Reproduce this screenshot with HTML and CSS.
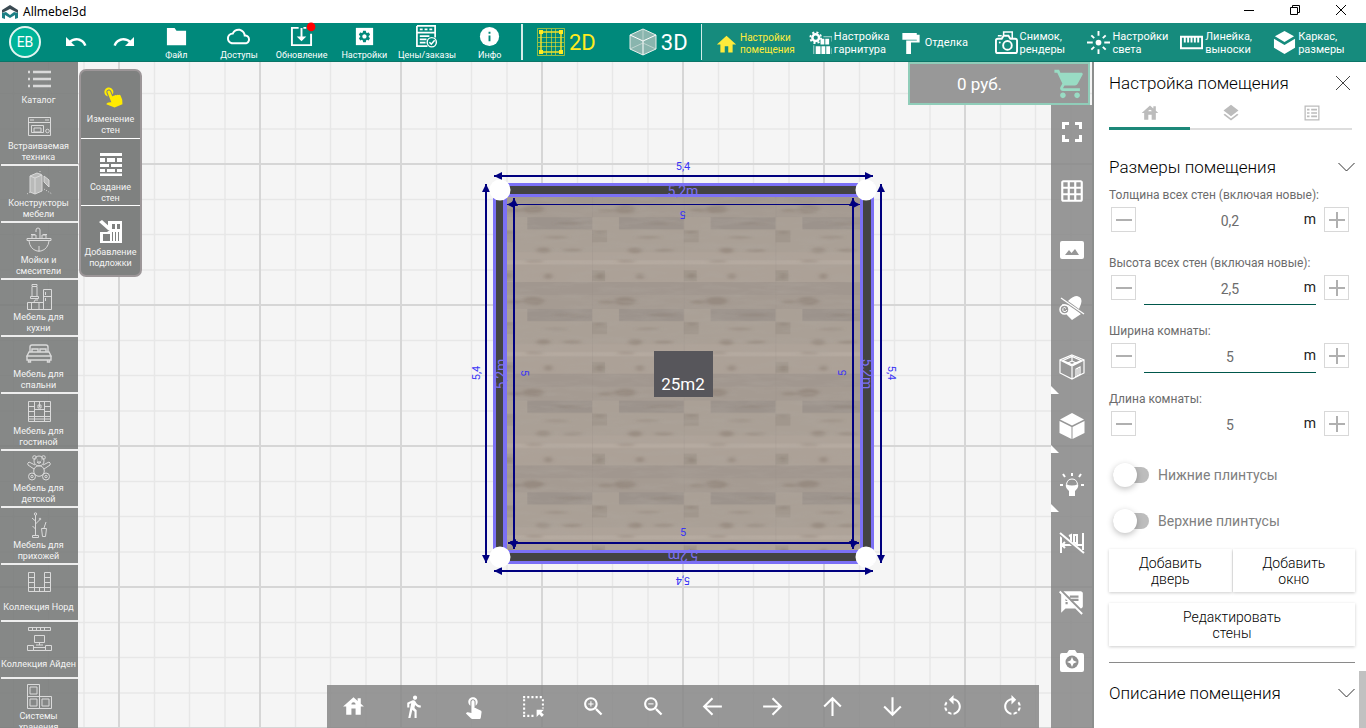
FILE: index.html
```html
<!DOCTYPE html>
<html lang="ru">
<head>
<meta charset="utf-8">
<title>Allmebel3d</title>
<link rel="stylesheet" href="styles.css">
</head>
<body>
<header class="titlebar">
  <svg class="app-logo" viewBox="0 0 16 16"><path d="M0 6l8-5 8 5v3l-8-4-8 4z" fill="#3a4a52"/><path d="M0 9l4-1 4 3 4-3 4 1v5l-3 1v-4l-5 3-5-3v4l-3-1z" fill="#1d7f85"/></svg>
  <span class="app-name">Allmebel3d</span>
  <div class="window-controls">
    <button aria-label="Свернуть"><svg viewBox="0 0 12 12"><path d="M1 6.500h10"/></svg></button>
    <button aria-label="Окно"><svg viewBox="0 0 12 12"><path d="M1.500 3.500h7v7h-7zM3.500 3.500v-2h7v7h-2"/></svg></button>
    <button aria-label="Закрыть"><svg viewBox="0 0 12 12"><path d="M1 1l10 10M11 1L1 11"/></svg></button>
  </div>
</header>

<nav class="toolbar">
  <div class="file-tools">
    <button class="avatar">EB</button>
    <button class="history" aria-label="Отменить"><svg viewBox="0 0 24 24"><path d="M12.500 8c-2.650 0-5.050.99-6.900 2.600L2 7v9h9l-3.620-3.620c1.390-1.160 3.160-1.880 5.120-1.880 3.540 0 6.550 2.310 7.600 5.500l2.370-.78C21.080 11.030 17.150 8 12.500 8z"/></svg></button>
    <button class="history" aria-label="Повторить"><svg viewBox="0 0 24 24"><path d="M18.400 10.600C16.550 8.990 14.150 8 11.500 8c-4.650 0-8.580 3.030-9.960 7.220L3.900 16c1.050-3.190 4.050-5.500 7.600-5.500 1.950 0 3.730.72 5.120 1.880L13 16h9V7l-3.600 3.600z"/></svg></button>
    <div class="file-actions">
      <button class="tool"><svg viewBox="0 0 24 24"><path d="M2 3h8l2 3h10v15H2z"/></svg>Файл</button>
      <button class="tool"><svg viewBox="0 0 24 24"><path d="M19.350 10.040C18.670 6.590 15.640 4 12 4 9.110 4 6.600 5.640 5.350 8.040 2.340 8.360 0 10.910 0 14c0 3.310 2.690 6 6 6h13c2.760 0 5-2.240 5-5 0-2.640-2.050-4.780-4.650-4.960zM19 18H6c-2.210 0-4-1.790-4-4s1.790-4 4-4h.71C7.370 7.690 9.480 6 12 6c3.040 0 5.500 2.460 5.500 5.500v.5H19c1.660 0 3 1.340 3 3s-1.340 3-3 3z"/></svg>Доступы</button>
      <button class="tool"><svg viewBox="0 0 24 24"><path d="M9 3H2v18h20V9M14 3h3" fill="none" stroke="#fff" stroke-width="2"/><path d="M11 3h2v9h4l-5 5-5-5h4z"/><circle cx="22" cy="2" r="4.500" fill="#f00"/></svg>Обновление</button>
      <button class="tool"><svg viewBox="0 0 24 24"><path d="M3 3h18v18H3z"/><g transform="translate(4.500 4.500) scale(.62)"><path fill="#00897b" fill-rule="evenodd" d="M19.140 12.940c.04-.3.06-.61.06-.94 0-.32-.02-.64-.07-.94l2.030-1.580c.18-.14.23-.41.12-.61l-1.920-3.320c-.12-.22-.37-.29-.59-.22l-2.390.96c-.5-.38-1.030-.7-1.620-.94l-.36-2.540c-.04-.24-.24-.41-.48-.41h-3.840c-.24 0-.43.17-.47.41l-.36 2.540c-.59.24-1.130.57-1.620.94l-2.390-.96c-.22-.08-.47 0-.59.22L2.740 8.870c-.12.21-.08.47.12.61l2.030 1.580c-.05.3-.09.63-.09.94s.02.64.07.94l-2.030 1.580c-.18.14-.23.41-.12.61l1.920 3.320c.12.22.37.29.59.22l2.390-.96c.5.38 1.030.7 1.620.94l.36 2.540c.05.24.24.41.48.41h3.840c.24 0 .44-.17.47-.41l.36-2.540c.59-.24 1.130-.56 1.620-.94l2.390.96c.22.08.47 0 .59-.22l1.920-3.320c.12-.22.07-.47-.12-.61l-2.010-1.580zM12 15.600c-1.980 0-3.600-1.620-3.600-3.600s1.620-3.600 3.600-3.600 3.600 1.620 3.600 3.600-1.620 3.600-3.600 3.600z"/></g></svg>Настройки</button>
      <button class="tool"><svg viewBox="0 0 24 24"><path d="M2 1h19v12M2 1v21h11M2 8h19M5 4.500h3M10 4.500h3M15 4.500h3M5 11.500h10M5 15h7M5 18.500h6" fill="none" stroke="#fff" stroke-width="1.800"/><circle cx="17.500" cy="18" r="4.800" fill="none" stroke="#fff" stroke-width="1.500"/><path d="M15 18l2 2 3.500-4" fill="none" stroke="#fff" stroke-width="1.600"/></svg>Цены/заказы</button>
      <button class="tool"><svg viewBox="0 0 24 24"><circle cx="12" cy="12" r="10"/><path d="M11 11h2v6h-2zM11 7h2v2h-2z" fill="#00897b"/></svg>Инфо</button>
    </div>
  </div>
  <div class="modes">
    <button class="mode mode-active"><svg viewBox="0 0 28 28" fill="none" stroke="#f4e02a"><path d="M.5.5h27v27H.5zM9.500 1v26M14.500 1v26M18.500 1v26M1 9.500h26M1 14.500h26M1 18.500h26" stroke-opacity=".6"/><path d="M4 4h20v20H4z" stroke-width="1.500"/><path d="M2 2h4v4H2zM22 2h4v4h-4zM2 22h4v4H2zM22 22h4v4h-4z" fill="#ffeb20" stroke="none"/></svg>2D</button>
    <button class="mode"><svg viewBox="0 0 28 28"><path d="M14 1l13 6v14l-13 6-13-6V7z" fill="#b7c4bf" fill-opacity=".75" stroke="#e8efec"/><path d="M1 7l13 6 13-6M14 13v14" fill="none" stroke="#fff"/><path d="M1 21l13-6 13 6M14 1v12" fill="none" stroke="#dfe7e4" stroke-opacity=".6"/></svg>3D</button>
  </div>
  <div class="sections">
    <button class="section section-active"><svg viewBox="0 0 24 24"><path d="M10 21v-7h4v7h5v-9h4L12 2 1 12h4v9z"/></svg><span>Настройки<br>помещения</span></button>
    <button class="section"><svg viewBox="0 0 24 24"><circle cx="7" cy="7" r="3.500" fill="none" stroke="#fff" stroke-width="2.600"/><circle cx="7" cy="7" r="5.600" fill="none" stroke="#fff" stroke-width="2" stroke-dasharray="2.200 2.200"/><path d="M12 8h4v6h-4zM17 8h4v6h-4zM7 16h5v8H7zM13 16h4v8h-4zM18 16h4v8h-4z"/><path d="M15 6h9v5M24 18v6M5 15v9" fill="none" stroke="#fff" stroke-opacity=".7"/></svg><span>Настройка<br>гарнитура</span></button>
    <button class="section section-single"><svg class="roller" viewBox="0 0 18 24"><path d="M0 2h15v2h3v8H9v12H4V10h11V6.500V9H0z"/></svg><span>Отделка</span></button>
    <button class="section"><svg viewBox="0 0 24 24" fill="none" stroke="#fff" stroke-width="2"><path d="M3 8h4l2-3h5l2 3h5q2 0 2 2v11q0 2-2 2H3q-2 0-2-2V10q0-2 2-2z"/><circle cx="13" cy="15" r="4.500"/><path d="M9 5V1h9v7M3 5h4" stroke-width="1.600"/><circle cx="5" cy="12" r="1" fill="#fff" stroke="none"/></svg><span>Снимок,<br>рендеры</span></button>
    <button class="section"><svg viewBox="0 0 24 24" stroke="#fff" stroke-width="2"><circle cx="12" cy="12" r="3" stroke="none"/><path d="M12 0v5M12 19v5M0 12h6M18 12h6M4.500 4.500l3 3M16.500 16.500l3 3M4.500 19.500l3-3M16.500 7.500l3-3"/></svg><span>Настройки<br>света</span></button>
    <button class="section"><svg viewBox="0 0 24 24" fill="none" stroke="#fff" stroke-width="2"><path d="M1 6h22v12H1zM5 6v6M8.500 6v6M12 6v6M15.500 6v6M19 6v6"/></svg><span>Линейка,<br>выноски</span></button>
    <button class="section"><svg viewBox="0 0 24 24"><path d="M12 0l10 5.500-10 6-10-6zM1 8l11 6.500L23 8v9.500L12 24 1 17.500z"/></svg><span>Каркас,<br>размеры</span></button>
  </div>
</nav>

<main class="workspace">
  <section class="stage">
    <svg class="scene" viewBox="0 62 1092 666" preserveAspectRatio="xMidYMid slice">
      <defs>
        <pattern id="grid" x="683" y="164" width="141" height="141" patternUnits="userSpaceOnUse">
          <path d="M35.500 0v141M70.500 0v141M106 0v141M0 35.500h141M0 70.500h141M0 106h141" stroke="#e7e7e7" stroke-width="1.500"/>
          <path d="M0 0h141M0 0v141M0 141h141M141 0v141" stroke="#d6d6d6" stroke-width="2"/>
        </pattern>
        <filter id="grain" x="0" y="0" width="100%" height="100%">
          <feTurbulence type="fractalNoise" baseFrequency=".03 .16" numOctaves="4" seed="7"/>
          <feColorMatrix values="0 0 0 0 .42  0 0 0 0 .38  0 0 0 0 .34  2 0 0 0 -.8"/>
        </filter>
        <filter id="soft"><feGaussianBlur stdDeviation="2 .8"/></filter>
        <pattern id="wood" x="592" y="282" width="91.700" height="91.700" patternUnits="userSpaceOnUse">
          <path fill="#aaa096" d="M0 0h92v92H0z"/>
          <path fill="#a1978f" d="M0 0h92v13H0z"/>
          <path fill="#a59b92" d="M0 13h92v14H0z"/>
          <path fill="#9c938c" d="M27 27h65v12H27z"/>
          <path fill="#aea399" d="M0 62h92v13H0z"/>
          <path fill="#b5aaa0" d="M0 70h92v4H0z"/>
          <path fill="#aca197" d="M0 75h92v17H0z"/>
          <path fill="#a1978d" d="M0 80h13v11H0zM0 40h15v12H0z"/>
          <g fill="#85786d" fill-opacity=".45" filter="url(#soft)">
            <ellipse cx="33" cy="19" rx="11" ry="4"/><ellipse cx="14" cy="20" rx="8" ry="1.500"/><ellipse cx="70" cy="33" rx="16" ry="1"/>
            <ellipse cx="43" cy="60" rx="7" ry="3"/><ellipse cx="8" cy="42" rx="5" ry="1"/><ellipse cx="34" cy="71" rx="9" ry="1"/>
            <ellipse cx="72" cy="60" rx="10" ry="1.500"/><ellipse cx="8" cy="86" rx="4" ry="3"/><ellipse cx="48" cy="86" rx="4" ry="3"/><ellipse cx="56" cy="47" rx="12" ry="1"/>
          </g>
          <path d="M0 0v92" stroke="#918780" stroke-opacity=".4"/>
        </pattern>
        <marker id="arrow" viewBox="0 0 8 8" refX="8" refY="4" markerWidth="8" markerHeight="8" markerUnits="userSpaceOnUse" orient="auto-start-reverse"><path d="M0 0l8 4-8 4z" fill="#00007f"/></marker>
      </defs>
      <path fill="#f5f5f5" d="M-1000-1000h3100v2700h-3100z"/>
      <path fill="url(#grid)" d="M-1000-1000h3100v2700h-3100z"/>
      <path fill="#7b70f5" d="M493 183h381v381H493z"/>
      <path fill="#434343" d="M496 186h375v375H496z"/>
      <path fill="#7b70f5" d="M503 194h360v359H503z"/>
      <path fill="url(#wood)" d="M507 197h353v353H507z"/>
      <rect x="507" y="197" width="353" height="353" filter="url(#grain)" opacity=".4"/>
      <path d="M507 195.500h353M507 551.500h353M505 197v353M861.500 197v353" stroke="#7b70f5" stroke-width="3"/>
      <g class="wall-size">
        <text x="683" y="196">5,2m</text>
        <text transform="translate(683 551) rotate(180)">5,2m</text>
        <text transform="translate(506 374) rotate(-90)">5,2m</text>
        <text transform="translate(862 374) rotate(90)">5,2m</text>
      </g>
      <g fill="none" stroke="#00007f" stroke-width="2">
        <path marker-start="url(#arrow)" marker-end="url(#arrow)" d="M494 176H873"/>
        <path marker-start="url(#arrow)" marker-end="url(#arrow)" d="M494 571H873"/>
        <path marker-start="url(#arrow)" marker-end="url(#arrow)" d="M486 184V563"/>
        <path marker-start="url(#arrow)" marker-end="url(#arrow)" d="M881 184V563"/>
        <path stroke-width="1" marker-start="url(#arrow)" marker-end="url(#arrow)" d="M507 204.500H860"/>
        <path marker-start="url(#arrow)" marker-end="url(#arrow)" d="M508 543H859"/>
        <path marker-start="url(#arrow)" marker-end="url(#arrow)" d="M514 198V549"/>
        <path marker-start="url(#arrow)" marker-end="url(#arrow)" d="M853 198V549"/>
      </g>
      <g fill="#fff"><circle cx="500" cy="190" r="10.500"/><circle cx="866" cy="190" r="10.500"/><circle cx="500" cy="557" r="10.500"/><circle cx="866" cy="557" r="10.500"/></g>
      <g class="dimension">
        <text x="683" y="170">5,4</text>
        <text transform="translate(683 577) rotate(180)">5,4</text>
        <text transform="translate(480 373) rotate(-90)">5,4</text>
        <text transform="translate(888 373) rotate(90)">5,4</text>
        <text transform="translate(683 211) rotate(180)">5</text>
        <text x="683" y="536">5</text>
        <text transform="translate(521 373) rotate(90)">5</text>
        <text transform="translate(846 373) rotate(-90)">5</text>
      </g>
      <path fill="#57565b" d="M654 351h59v46h-59z"/>
      <text class="area" x="683" y="390">25m2</text>
    </svg>

    <nav class="catalog">
      <button class="category category-first"><svg viewBox="0 0 26 26"><path d="M2 6h2M2 13h2M2 20h2M7 6h18M7 13h18M7 20h18" stroke-width="2.400"/></svg><span>Каталог</span></button>
      <button class="category"><svg viewBox="0 0 26 26"><path d="M2.500 4.500h22v18h-22zM2.500 9.500h22M4 7h4M19 7h4M5.500 12.500h12v7h-12zM8 15h7v4H8z"/><circle cx="21.500" cy="18" r="1.800"/></svg><span>Встраиваемая<br>техника</span></button>
      <button class="category"><svg viewBox="0 0 26 26"><path d="M4 6l7-3 5 2v16l-7 3-5-2z" fill="#b9bab9"/><path d="M4 6l5 2v16M9 8l7-3"/><path d="M18 6l5 4v7l-5-5z" fill="#b9bab9"/><path d="M1 24l3-2M14 1v3M18 19l8 5" stroke-dasharray="1 1.500"/></svg><span>Конструкторы<br>мебели</span></button>
      <button class="category"><svg viewBox="0 0 26 26"><path d="M1 11.500h24v2H1zM3 14q1 8 8 10h4q7-2 8-10M13 19v6M14 11V3q0-2-2-2t-2 2v2M6 11V8h4v3M16 11V8h4v3M5 7.500h4M17 7.500h4"/></svg><span>Мойки и<br>смесители</span></button>
      <button class="category"><svg viewBox="0 0 26 26"><path d="M6 .5h5v2H6zM6 3v9M11 3v9M4.500 12.500h8v2h-8zM17.500 5.500h8v20h-8zM17.500 12.500h8M19.500 8v3M19.500 14v3M1.500 18.500h16v7h-16zM5.500 19v6M13 19v6M8 18l1-2h3"/></svg><span>Мебель для<br>кухни</span></button>
      <button class="category"><svg viewBox="0 0 26 26"><path d="M4 11V6q0-2 2-2h14q2 0 2 2v5M6 11V8h6v3M14 11V8h6v3M3 11h20l2 4H1zM1 15h24v4H1zM2.500 19v2h2v-2M21.500 19v2h2v-2" stroke-width="1.400"/></svg><span>Мебель для<br>спальни</span></button>
      <button class="category"><svg viewBox="0 0 26 26"><path d="M2.500 3.500h22v20h-22zM8.500 4v20M18.500 4v20M3 8.500h5M3 13.500h5M19 8.500h5M19 13.500h5M9 11.500h9M3 18.500h21M3 21h21M13.500 4v5M12 7h3v3h-3z"/></svg><span>Мебель для<br>гостиной</span></button>
      <button class="category"><svg viewBox="0 0 26 26"><circle cx="13" cy="6" r="5"/><circle cx="8.500" cy="2.500" r="1.800"/><circle cx="17.500" cy="2.500" r="1.800"/><path d="M11 7q2 3 4 0zM11 5h.5M15 5h.5M9 10L3 7q-2 1-1 3l6 4M17 10l6-3q2 1 1 3l-6 4"/><circle cx="13" cy="16" r="5.300"/><circle cx="6" cy="21.500" r="3.500"/><circle cx="20" cy="21.500" r="3.500"/><circle cx="6" cy="21.500" r="1.200"/><circle cx="20" cy="21.500" r="1.200"/></svg><span>Мебель для<br>детской</span></button>
      <button class="category"><svg viewBox="0 0 26 26"><path d="M9.500 3v20M6.500 23.500h6v2h-6zM9.500 9L6 6M9.500 12l4-4M9.500 17l-3-3M15.500 16.500h5l-1 8h-3zM18 16l2-6"/><circle cx="9.500" cy="2" r="1.200"/><circle cx="14" cy="7" r=".8"/></svg><span>Мебель для<br>прихожей</span></button>
      <button class="category"><svg viewBox="0 0 26 26"><path d="M2.500 3.500h6v19h-6zM18.500 3.500h6v19h-6zM3 8.500h5M3 13.500h5M19 8.500h5M19 13.500h5M2.500 18.500h22M8 22.500h11M13.500 19v3"/></svg><span>Коллекция Норд</span></button>
      <button class="category"><svg viewBox="0 0 26 26"><path d="M2.500 1.500h22v3h-22zM6.500 2v3M10.500 2v3M14.500 2v3M18.500 2v3M8.500 9.500h10v7h-10zM13.500 17v2M10 19h7M1.500 19.500h6v5h-6zM19.500 19.500h6v5h-6zM7.500 21.500h12v3h-12z"/></svg><span>Коллекция Айден</span></button>
      <button class="category"><svg viewBox="0 0 26 26"><path d="M1.500 1.500h12v12h-12zM1.500 13.500h12v12h-12zM13.500 13.500h12v12h-12zM4 4h7v7H4zM4 16h7v7H4zM16 16h7v7h-7z"/></svg><span>Системы<br>хранения</span></button>
    </nav>

    <nav class="wall-menu">
      <button class="wall-tool wall-tool-active"><svg viewBox="0 0 24 24"><g transform="rotate(-22 12 12)"><path d="M9 11.240V7.500C9 6.120 10.120 5 11.500 5S14 6.120 14 7.500v3.740c1.210-.81 2-2.180 2-3.740C16 5.010 13.990 3 11.500 3S7 5.010 7 7.500c0 1.560.79 2.930 2 3.740z"/><path d="M10 7.500c0-2 3-2 3 0V13q1-1 2 0 1.500-1 2.300.3 1.400-.6 2 .7 1.500-.2 1.700 1.200v4.500L19.500 24H11l-6.500-6q1.500-2 5.500 0z"/></g></svg><span>Изменение<br>стен</span></button>
      <button class="wall-tool"><svg viewBox="0 0 24 24"><path d="M1 1h22v3H1zM1 6h5v4H1zM8 6h8v4H8zM18 6h5v4h-5zM1 12h9v3H1zM12 12h11v3H12zM1 17h5v3H1zM8 17h8v3H8zM18 17h5v3h-5zM1 21.500h22V24H1z"/></svg><span>Создание<br>стен</span></button>
      <button class="wall-tool"><svg viewBox="0 0 24 24"><path fill-rule="evenodd" d="M9 1h14v22H1V12h7l3-2-2-4zM13 4v5h3V4zM18 4v5h3V4zM4 14v7h7v-7zM13 12v9h1v-9zM16 12v9h1v-9zM19 12v9h1v-9z"/><path d="M0 2l3-2 9 8v3l-3-1z"/></svg><span>Добавление<br>подложки</span></button>
    </nav>

    <div class="price"><span>0 руб.</span><svg viewBox="0 0 24 24"><path d="M7 18c-1.100 0-1.990.9-1.990 2S5.900 22 7 22s2-.9 2-2-.9-2-2-2zM1 2v2h2l3.600 7.590-1.350 2.450c-.16.28-.25.61-.25.96 0 1.100.9 2 2 2h12v-2H7.420c-.14 0-.25-.11-.25-.25l.03-.12.9-1.630h7.450c.75 0 1.410-.41 1.750-1.030l3.580-6.490c.08-.14.12-.31.12-.48 0-.55-.45-1-1-1H5.210l-.94-2H1zm16 16c-1.100 0-1.990.9-1.990 2s.89 2 1.990 2 2-.9 2-2-.9-2-2-2z"/></svg></div>

    <nav class="view-tools">
      <button aria-label="Во весь экран"><svg viewBox="0 0 26 26" fill="none" stroke="#fff" stroke-width="3"><path d="M4.500 10V4.500H10M16 4.500h5.500V10M21.500 16v5.500H16M10 21.500H4.500V16"/></svg></button>
      <button aria-label="Сетка"><svg viewBox="0 0 24 24"><path d="M20 2H4c-1.100 0-2 .9-2 2v16c0 1.100.9 2 2 2h16c1.100 0 2-.9 2-2V4c0-1.100-.9-2-2-2zM8 20H4v-4h4v4zm0-6H4v-4h4v4zm0-6H4V4h4v4zm6 12h-4v-4h4v4zm0-6h-4v-4h4v4zm0-6h-4V4h4v4zm6 12h-4v-4h4v4zm0-6h-4v-4h4v4zm0-6h-4V4h4v4z"/></svg></button>
      <button aria-label="Фон"><svg viewBox="0 0 26 26"><path fill-rule="evenodd" d="M3 4h20q2 0 2 2v14q0 2-2 2H3q-2 0-2-2V6q0-2 2-2zM6 18h14l-4-6-3.500 4-2.500-3z"/></svg></button>
      <button aria-label="Материалы"><svg viewBox="0 0 26 26"><path d="M9 6q5-5 9-5 6 1 4 8l-2 5zM3 9l8 1 11 9-9 6-5-5z"/><circle cx="5.500" cy="14.500" r="4.500" fill="#989898" stroke="#fff" stroke-width="1.500"/><path d="M8 15q-1 2-3 1.500t-1-3 3 0" fill="none" stroke="#fff"/><path d="M3 5l22 15" stroke="#989898" stroke-width="1.500"/><path d="M2 3l23 16" stroke="#fff" stroke-width="1.300"/></svg></button>
      <button class="has-more" aria-label="Комната"><svg viewBox="0 0 26 26" fill="none" stroke="#fff" stroke-width="1.200"><path d="M13 1l12 5v13l-12 6-12-6V6zM1 6l12 6 12-6M13 12v13M4 6.500l9-4 9 4-9 4zM13 3v4l4 2M13 7l-4 2M17 23v-8l4-2v8M19 14v8"/></svg></button>
      <button class="has-more" aria-label="Объект"><svg viewBox="0 0 26 26"><path d="M13 0l12 6.500-12 6-12-6zM.5 8l12 6v12l-12-6zM25.500 8l-12 6v12l12-6z"/></svg></button>
      <button class="has-more" aria-label="Свет"><svg viewBox="0 0 26 26"><path d="M9 18q-3-3-2-6 6 3 12 0 1 3-2 6l-1 1v5h-6v-5z"/><path d="M7.500 12q1-5 5.500-5t5.500 5" fill="none" stroke="#fff"/><path d="M13 4V1M6 5L4 2M20 5l2-3M4 13H1M22 13h3" stroke="#fff" stroke-width="2"/></svg></button>
      <button aria-label="Размеры"><svg viewBox="0 0 26 26" fill="none" stroke="#fff" stroke-width="2"><path d="M2 3v20M24 3v17M3 15h20M6 12l-3 3 3 3M10 6l2-1v8M15 5h3v8h-3z"/><path d="M1 4l24 20" stroke="#989898" stroke-width="3"/><path d="M1 3l24 20"/></svg></button>
      <button aria-label="Заметки"><svg viewBox="0 0 24 24"><path d="M10.540 11l-.54-.54L7.540 8 6 6.460 2.380 2.840 1.270 1.730 0 3l2.010 2.010L2 22l4-4h9l5.730 5.730L22 22.460 17.540 18l-7-7zM8 14H6v-2h2v2zm-2-3V9l2 2H6zm14-9H4.080L10 7.920V6h8v2h-7.920l1 1H18v2h-4.920l6.990 6.990C21.140 17.950 22 17.080 22 16V4c0-1.100-.9-2-2-2z"/></svg></button>
      <button aria-label="Снимок"><svg viewBox="0 0 26 26"><path d="M3 5h5l2-3h6l2 3h5q2 0 2 2v15q0 2-2 2H3q-2 0-2-2V7q0-2 2-2z"/><circle cx="13" cy="14" r="6.500" fill="#909090"/><path d="M13 9l1.500 3.500L18 14l-3.500 1.500L13 19l-1.500-3.500L8 14l3.500-1.500z"/></svg></button>
    </nav>

    <nav class="camera-bar">
      <button aria-label="Домой"><svg viewBox="0 0 24 24"><path d="M19 9.300V4h-3v2.600L12 3 2 12h3v8h5v-6h4v6h5v-8h3l-3-2.700zM10 10c0-1.100.9-2 2-2s2 .9 2 2h-4z"/></svg></button>
      <button aria-label="Прогулка"><svg viewBox="0 0 24 24"><path d="M13.500 5.500c1.100 0 2-.9 2-2s-.9-2-2-2-2 .9-2 2 .9 2 2 2zM9.800 8.900L7 23h2.100l1.800-8 2.100 2v6h2v-7.500l-2.100-2 .6-3C14.800 12 16.800 13 19 13v-2c-1.900 0-3.500-1-4.300-2.400l-1-1.600c-.4-.6-1-1-1.700-1-.3 0-.5.1-.8.1L6 8.300V13h2V9.600l1.800-.7"/></svg></button>
      <button aria-label="Касание"><svg viewBox="0 0 24 24"><path d="M9 11.240V7.500C9 6.120 10.120 5 11.500 5S14 6.120 14 7.500v3.740c1.210-.81 2-2.180 2-3.740C16 5.010 13.990 3 11.500 3S7 5.010 7 7.500c0 1.560.79 2.930 2 3.740zm9.840 4.630l-4.540-2.260c-.17-.07-.35-.11-.54-.11H13v-6c0-.83-.67-1.500-1.500-1.500S10 6.670 10 7.500v10.740l-3.430-.72c-.08-.01-.15-.03-.24-.03-.31 0-.59.13-.79.33l-.79.8 4.940 4.940c.27.27.65.44 1.060.44h6.790c.75 0 1.330-.55 1.440-1.280l.75-5.270c.01-.07.02-.14.02-.2 0-.62-.38-1.160-.91-1.380z"/></svg></button>
      <button aria-label="Выделение"><svg viewBox="0 0 24 24"><path d="M2 3h20M3 5v14M21 5v9M2 21h12" fill="none" stroke="#fff" stroke-width="2" stroke-dasharray="2 2"/><path d="M15 15h7l-2.500 2.500L22 20l-2 2-2.500-2.500L15 22z"/></svg></button>
      <button aria-label="Приблизить"><svg viewBox="0 0 24 24"><path d="M15.500 14h-.79l-.28-.27C15.410 12.590 16 11.110 16 9.500 16 5.910 13.090 3 9.500 3S3 5.910 3 9.500 5.910 16 9.500 16c1.610 0 3.090-.59 4.230-1.570l.27.28v.79l5 4.990L20.490 19l-4.990-5zm-6 0C7.010 14 5 11.990 5 9.500S7.010 5 9.500 5 14 7.010 14 9.500 11.990 14 9.500 14z"/><path d="M12 10h-2v2H9v-2H7V9h2V7h1v2h2z"/></svg></button>
      <button aria-label="Отдалить"><svg viewBox="0 0 24 24"><path d="M15.500 14h-.79l-.28-.27C15.410 12.590 16 11.110 16 9.500 16 5.910 13.090 3 9.500 3S3 5.910 3 9.500 5.910 16 9.500 16c1.610 0 3.090-.59 4.230-1.570l.27.28v.79l5 4.990L20.490 19l-4.990-5zm-6 0C7.010 14 5 11.990 5 9.500S7.010 5 9.500 5 14 7.010 14 9.500 11.990 14 9.500 14z"/><path d="M7 9h5v1H7z"/></svg></button>
      <button class="line-icon" aria-label="Влево"><svg viewBox="0 0 24 24"><path d="M21 12H4M12 4l-8 8 8 8"/></svg></button>
      <button class="line-icon" aria-label="Вправо"><svg viewBox="0 0 24 24"><path d="M3 12h17M12 4l8 8-8 8"/></svg></button>
      <button class="line-icon" aria-label="Вверх"><svg viewBox="0 0 24 24"><path d="M12 21V4M4 12l8-8 8 8"/></svg></button>
      <button class="line-icon" aria-label="Вниз"><svg viewBox="0 0 24 24"><path d="M12 3v17M4 12l8 8 8-8"/></svg></button>
      <button aria-label="Повернуть влево"><svg viewBox="0 0 24 24"><path d="M7.110 8.530L5.700 7.110C4.800 8.270 4.240 9.610 4.070 11h2.020c.14-.87.49-1.720 1.020-2.470zM6.090 13H4.070c.17 1.390.72 2.730 1.620 3.890l1.410-1.420c-.52-.75-.87-1.590-1.010-2.470zm1.010 5.320c1.160.9 2.510 1.440 3.900 1.610V17.900c-.87-.15-1.710-.49-2.460-1.030L7.100 18.320zM13 4.070V1L8.450 5.550 13 10V6.090c2.840.48 5 2.940 5 5.910s-2.160 5.430-5 5.910v2.020c3.950-.49 7-3.850 7-7.930s-3.050-7.440-7-7.930z"/></svg></button>
      <button aria-label="Повернуть вправо"><svg viewBox="0 0 24 24"><g transform="matrix(-1 0 0 1 24 0)"><path d="M7.110 8.530L5.700 7.110C4.800 8.270 4.240 9.610 4.070 11h2.020c.14-.87.49-1.720 1.020-2.470zM6.090 13H4.070c.17 1.390.72 2.730 1.620 3.890l1.410-1.420c-.52-.75-.87-1.590-1.010-2.470zm1.010 5.320c1.160.9 2.510 1.440 3.900 1.610V17.900c-.87-.15-1.710-.49-2.460-1.030L7.100 18.320zM13 4.070V1L8.450 5.550 13 10V6.090c2.840.48 5 2.940 5 5.910s-2.160 5.430-5 5.910v2.020c3.950-.49 7-3.850 7-7.930s-3.050-7.440-7-7.930z"/></g></svg></button>
    </nav>
  </section>

  <aside class="panel">
    <header class="panel-head">
      <h1>Настройка помещения</h1>
      <button class="panel-close" aria-label="Закрыть панель"><svg viewBox="0 0 16 16"><path d="M1 1l14 14M15 1L1 15"/></svg></button>
    </header>
    <div class="tabs">
      <button class="tab tab-active" aria-label="Помещение"><svg viewBox="0 0 24 24"><path d="M19 9.300V4h-3v2.600L12 3 2 12h3v8h5v-6h4v6h5v-8h3l-3-2.700zM10 10c0-1.100.9-2 2-2s2 .9 2 2h-4z"/></svg></button>
      <button class="tab" aria-label="Слои"><svg viewBox="0 0 24 24"><path d="M11.990 18.540l-7.370-5.730L3 14.070l9 7 9-7-1.630-1.270-7.380 5.740zM12 16l7.360-5.730L21 9l-9-7-9 7 1.630 1.270L12 16z"/></svg></button>
      <button class="tab" aria-label="Список"><svg viewBox="0 0 24 24"><path fill-rule="evenodd" d="M3 3h18v18H3zM4.500 4.500v15h15v-15zM6 7h3v2H6zM11 7h7v2h-7zM6 11h3v2H6zM11 11h7v2h-7zM6 15h3v2H6zM11 15h7v2h-7z"/></svg></button>
    </div>
    <section class="sizes">
      <div class="section-head"><h2>Размеры помещения</h2><button aria-label="Свернуть раздел"><svg viewBox="0 0 16 10"><path d="M0 1l8 8 8-8"/></svg></button></div>
      <div class="field">
        <label for="thick">Толщина всех стен (включая новые):</label>
        <div class="stepper"><button class="step" aria-label="Меньше"><svg viewBox="0 0 16 16"><path d="M0 8h16"/></svg></button><div class="value"><input id="thick" type="text" value="0,2"><span>m</span></div><button class="step" aria-label="Больше"><svg viewBox="0 0 16 16"><path d="M0 8h16M8 0v16"/></svg></button></div>
      </div>
      <div class="field">
        <label for="height">Высота всех стен (включая новые):</label>
        <div class="stepper"><button class="step" aria-label="Меньше"><svg viewBox="0 0 16 16"><path d="M0 8h16"/></svg></button><div class="value underlined"><input id="height" type="text" value="2,5"><span>m</span></div><button class="step" aria-label="Больше"><svg viewBox="0 0 16 16"><path d="M0 8h16M8 0v16"/></svg></button></div>
      </div>
      <div class="field">
        <label for="width">Ширина комнаты:</label>
        <div class="stepper"><button class="step" aria-label="Меньше"><svg viewBox="0 0 16 16"><path d="M0 8h16"/></svg></button><div class="value underlined"><input id="width" type="text" value="5"><span>m</span></div><button class="step" aria-label="Больше"><svg viewBox="0 0 16 16"><path d="M0 8h16M8 0v16"/></svg></button></div>
      </div>
      <div class="field">
        <label for="length">Длина комнаты:</label>
        <div class="stepper"><button class="step" aria-label="Меньше"><svg viewBox="0 0 16 16"><path d="M0 8h16"/></svg></button><div class="value"><input id="length" type="text" value="5"><span>m</span></div><button class="step" aria-label="Больше"><svg viewBox="0 0 16 16"><path d="M0 8h16M8 0v16"/></svg></button></div>
      </div>
    </section>
    <div class="switches">
      <label class="switch"><input type="checkbox"><span>Нижние плинтусы</span></label>
      <label class="switch"><input type="checkbox"><span>Верхние плинтусы</span></label>
    </div>
    <div class="actions">
      <button>Добавить<br>дверь</button>
      <button>Добавить<br>окно</button>
      <button class="wide">Редактировать<br>стены</button>
    </div>
    <div class="section-head description"><h2>Описание помещения</h2><button aria-label="Развернуть раздел"><svg viewBox="0 0 16 10"><path d="M0 1l8 8 8-8"/></svg></button></div>
    <div class="scroll-thumb"></div>
  </aside>
</main>
</body>
</html>
```
FILE: styles.css
```css
* { box-sizing: border-box; }
body { margin: 0; height: 100vh; display: flex; flex-direction: column; overflow: hidden; font-family: Roboto, "Noto Sans", sans-serif; background: #fff; }
button { font: inherit; color: inherit; background: none; border: 0; padding: 0; margin: 0; }
svg { display: block; flex: none; }

.titlebar { display: flex; align-items: center; flex: none; height: 23px; padding-left: 2px; color: #000; }
.app-logo { width: 16px; height: 16px; }
.app-name { flex: 1; margin-left: 5px; font: 12px "Noto Sans", sans-serif; }
.window-controls { display: flex; gap: 34px; padding: 0 19px 3px 0; }
.window-controls svg { width: 12px; height: 12px; fill: none; stroke: #000; }

.toolbar { display: flex; flex: none; height: 39px; background: #00897b; border-bottom: 1px solid #0b7568; color: #fff; fill: #fff; }
.file-tools { display: flex; width: 521px; }
.avatar { width: 32px; height: 32px; margin: 3px 9px; border: 2px solid #e4f5f1; border-radius: 50%; background: #00b398; font-size: 14px; }
.history { width: 52px; }
.history + .history { width: 43px; }
.history svg { width: 24px; height: 24px; margin: 0 auto; }
.file-actions { display: grid; grid-template-columns: repeat(6, 1fr); flex: 1; }
.tool { display: flex; flex-direction: column; align-items: center; justify-content: flex-end; gap: 1px; padding-bottom: 0; font-size: 9px; line-height: 12px; white-space: nowrap; }
.tool svg { width: 23px; height: 23px; overflow: visible; }
.modes { display: flex; align-items: center; gap: 33px; width: 181px; margin: 1px 0; padding-left: 14px; border-left: 2px solid #d5ece8; border-right: 1px solid #d5ece8; }
.mode { display: flex; align-items: center; gap: 4px; font-size: 22px; }
.mode svg { width: 28px; height: 28px; }
.mode-active { color: #ffeb20; }
.sections { flex: 1; display: grid; grid-template-columns: repeat(7, 1fr); padding: 1px 0 0 14px; background: #168b7d; }
.section { display: flex; align-items: center; gap: 2px; text-align: left; font-size: 11px; line-height: 13px; white-space: nowrap; }
.section svg { width: 23px; height: 23px; }
.section .roller { width: 18px; }
.section-single { gap: 5px; }
.section-active { gap: 3px; padding-top: 3px; color: #ffeb3b; fill: #ffeb3b; font-size: 10px; line-height: 12px; }
.section-active svg { width: 21px; }

.workspace { display: flex; flex: 1; min-height: 0; }
.stage { position: relative; display: flex; flex: 1; min-width: 0; overflow: hidden; border-right: 2px solid #8c8e8d; background: #f5f5f5; }
.scene { position: absolute; inset: 0; width: 100%; height: 100%; }
.wall-size { font-size: 14px; fill: #7b70f5; text-anchor: middle; }
.dimension { font-size: 11px; fill: #3a35f5; text-anchor: middle; }
.area { font-size: 17px; fill: #fff; text-anchor: middle; }

.catalog { position: relative; display: flex; flex-direction: column; width: 78px; padding-left: 1px; overflow: hidden; background: rgba(118, 121, 119, .88); color: #f4f4f4; }
.category { flex: none; display: flex; flex-direction: column; align-items: center; height: 57px; padding: 4px 2px 0 0; border-bottom: 2px solid #eee; font-size: 9px; line-height: 11px; white-space: nowrap; }
.category svg { width: 26px; height: 26px; fill: none; stroke: #dadada; }
.category span { display: flex; flex: 1; align-items: center; text-align: center; }
.category-first { height: 47px; border: 0; }

.wall-menu { position: relative; align-self: flex-start; width: 63px; margin: 7px 0 0 1px; border: 2px solid #9c9698; border-radius: 7px; background: #7f8180; color: #f4f4f4; fill: #fff; }
.wall-tool { display: flex; flex-direction: column; align-items: center; gap: 6px; width: 100%; height: 67px; padding-top: 13px; border-bottom: 1px solid #fff; font-size: 9px; line-height: 11px; }
.wall-tool:last-child { height: 69px; padding-top: 14px; border: 0; gap: 3px; }
.wall-tool svg { width: 24px; height: 24px; }
.wall-tool-active { height: 68px; fill: #ffeb00; }

.price { position: absolute; top: 0; right: 2px; display: flex; align-items: center; width: 182px; height: 43px; border: 2px solid #90cdb9; background: #989898; color: #fff; font-size: 17px; }
.price span { flex: 1; padding-right: 4px; text-align: center; }
.price svg { width: 34px; height: 34px; margin-right: 1px; fill: #99dcc4; }
.view-tools { position: relative; display: flex; flex-direction: column; justify-content: space-between; width: 41px; margin: 43px 0 0 auto; padding: 14px 0 54px; background: rgba(130, 130, 130, .82); fill: #fff; }
.view-tools button { position: relative; }
.view-tools svg { width: 26px; height: 26px; margin: 0 auto; }
.has-more::after { content: ""; position: absolute; left: 0; bottom: -14px; border-bottom: 8px solid #fff; border-right: 8px solid transparent; }
.camera-bar { position: absolute; left: 327px; right: 53px; bottom: 0; display: flex; justify-content: space-between; height: 43px; padding: 0 14px; background: rgba(130, 130, 130, .82); fill: #fff; }
.camera-bar svg { width: 25px; height: 25px; }
.line-icon svg { fill: none; stroke: #fff; stroke-width: 2; }

.panel { position: relative; display: flex; flex-direction: column; width: 272px; padding: 9px 11px 0 15px; overflow: hidden; background: #fff; color: #000; font-weight: 300; }
h1, h2 { margin: 0; font-size: 17px; font-weight: 300; line-height: 24px; }
.panel-head, .section-head { display: flex; flex: none; align-items: center; justify-content: space-between; }
.panel-close { margin-right: 4px; }
.panel-close svg { width: 16px; height: 16px; fill: none; stroke: #444; }
.tabs { display: grid; grid-template-columns: repeat(3, 1fr); margin-right: 3px; }
.tab { height: 35px; padding-top: 8px; border-bottom: 2px solid #ddd; fill: #bcbcbc; }
.tab svg { width: 20px; height: 20px; margin: 0 auto 5px; }
.tab-active { border-bottom: 3px solid #1c8879; }
.sizes { margin-top: 25px; }
.section-head svg { width: 17px; height: 10px; fill: none; stroke: #333; }
.field { height: 68px; padding-top: 8px; }
.field label { display: block; font-size: 12px; font-weight: 400; line-height: 16px; color: #6c6c6c; white-space: nowrap; }
.stepper { display: flex; align-items: flex-start; gap: 8px; padding: 4px 6px 0 2px; }
.step { flex: none; width: 25px; height: 25px; border: 1px solid #d8d8d8; }
.step svg { width: 16px; height: 16px; margin: 0 auto; stroke: #b0b0b0; stroke-width: 2; }
.value { position: relative; flex: 1; height: 30px; }
.underlined { border-bottom: 1px solid #00574b; }
.value input { width: 100%; height: 28px; padding: 0; border: 0; outline: 0; background: none; text-align: center; font: 14px Roboto, "Noto Sans", sans-serif; color: #6c6c6c; }
.value span { position: absolute; right: 0; top: 3px; font-size: 14px; font-weight: 400; line-height: 18px; color: #222; }
.switches { padding-top: 1px; }
.switch { display: flex; align-items: center; height: 46px; font-size: 14px; font-weight: 400; color: #808080; }
.switch input { appearance: none; position: relative; width: 36px; height: 16px; margin: 0 9px 0 4px; border-radius: 8px; background: #bdbdbd; }
.switch input::before { content: ""; position: absolute; left: 0; top: -4px; width: 24px; height: 24px; border-radius: 50%; background: #fff; box-shadow: 0 2px 6px rgba(0, 0, 0, .25); }
.actions { display: grid; grid-template-columns: 1fr 1fr; gap: 11px 1px; margin-top: 5px; padding-bottom: 16px; border-bottom: 1px solid #8a8a8a; }
.actions button { height: 43px; background: #fff; box-shadow: 0 1px 3px rgba(0, 0, 0, .2); font-size: 14px; line-height: 16px; }
.actions .wide { grid-column: 1 / 3; }
.description { margin-top: 18px; }
.scroll-thumb { position: absolute; right: 0; bottom: 0; width: 7px; height: 57px; background: #c1c1c1; }
```
